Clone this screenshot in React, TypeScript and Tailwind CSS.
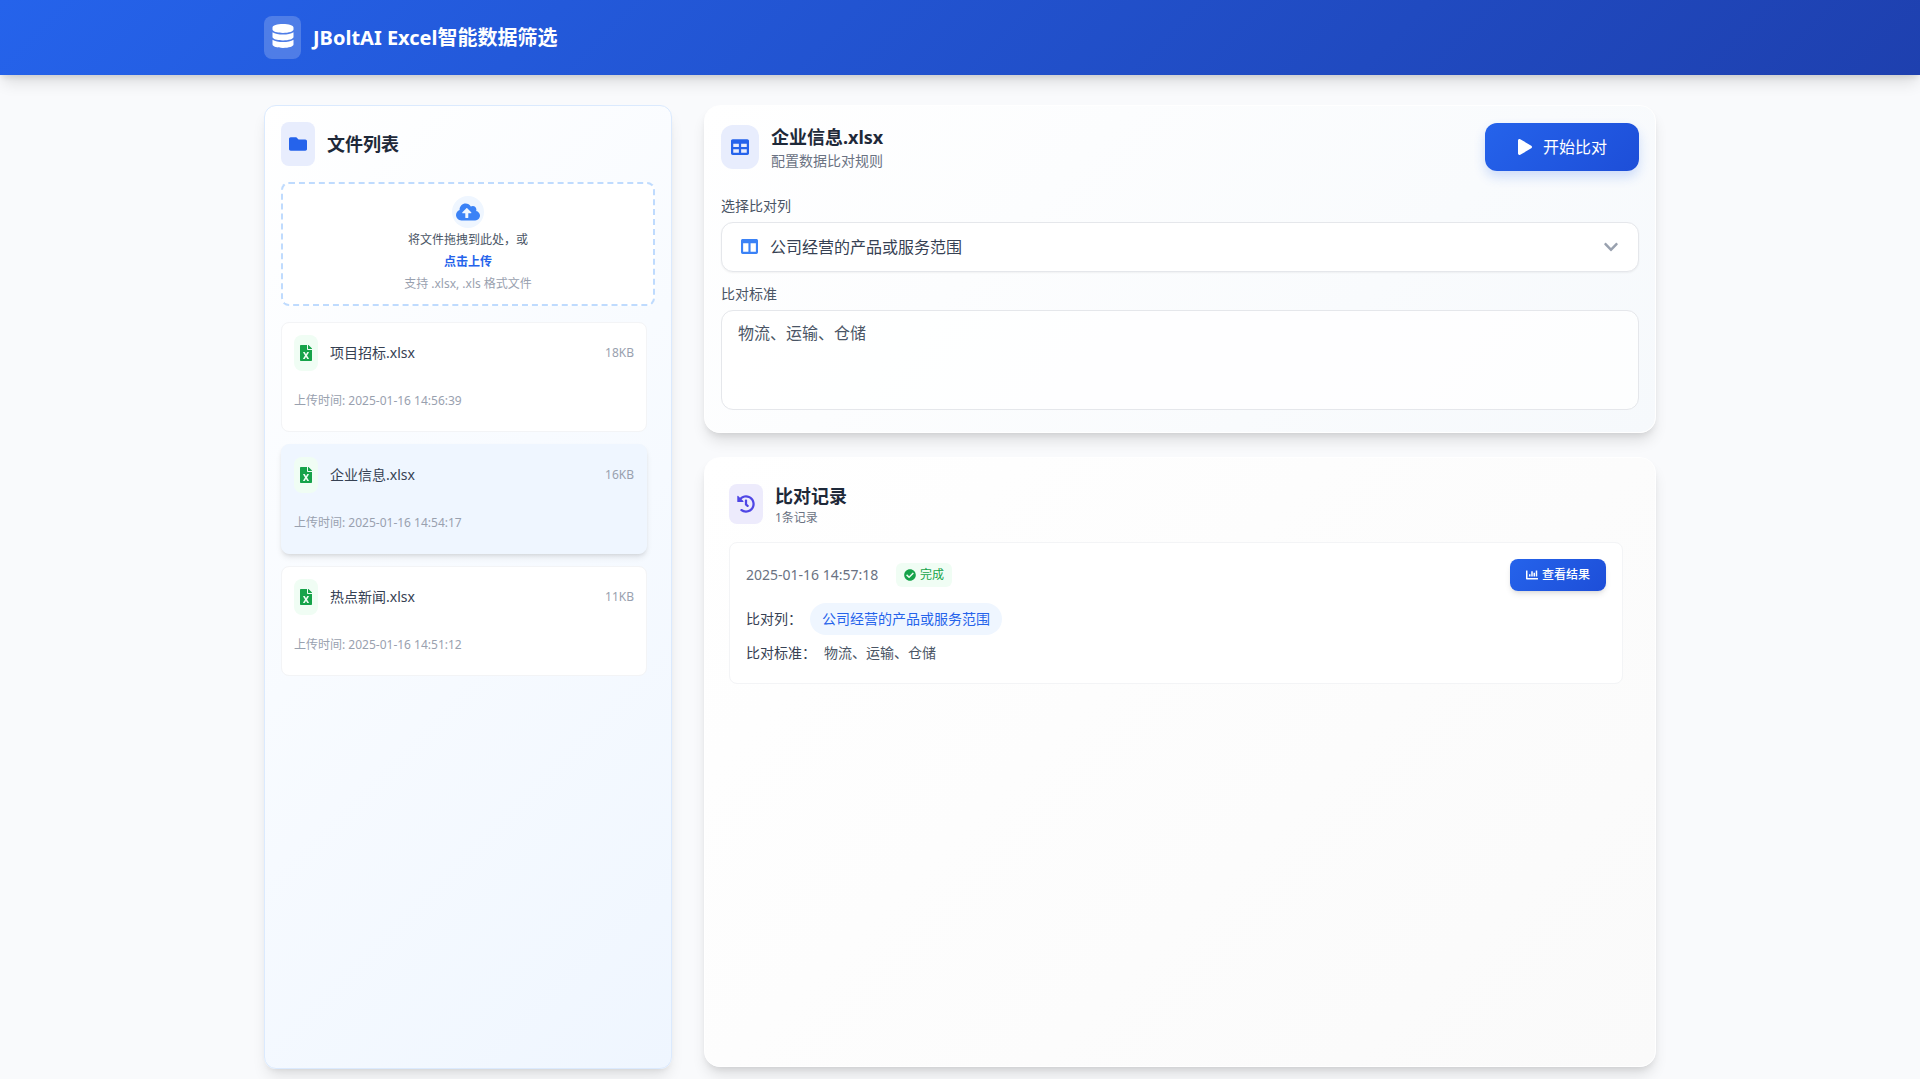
import {
  FaChartBar,
  FaCheckCircle,
  FaChevronDown,
  FaCloudUploadAlt,
  FaColumns,
  FaDatabase,
  FaFileExcel,
  FaFolder,
  FaHistory,
  FaPlay,
  FaTable,
} from "react-icons/fa";

const files = [
  { name: "项目招标.xlsx", size: "18KB", time: "2025-01-16 14:56:39" },
  { name: "企业信息.xlsx", size: "16KB", time: "2025-01-16 14:54:17", active: true },
  { name: "热点新闻.xlsx", size: "11KB", time: "2025-01-16 14:51:12" },
];

const records = [
  {
    time: "2025-01-16 14:57:18",
    status: "完成",
    column: "公司经营的产品或服务范围",
    standard: "物流、运输、仓储",
  },
];

function Header() {
  return (
    <header className="bg-[linear-gradient(135deg,#2563eb,#1e40af)] py-4 shadow-[0_10px_15px_-3px_rgba(0,0,0,0.12),0_4px_6px_-2px_rgba(0,0,0,0.1)]">
      <div className="mx-auto flex max-w-[1440px] items-center gap-3 px-6">
        <div className="flex h-[43px] w-[37px] items-center justify-center rounded-lg bg-white/20 pb-1">
          <FaDatabase className="h-6 w-6 text-white" />
        </div>
        <h1 className="text-xl font-bold text-white">JBoltAI Excel智能数据筛选</h1>
      </div>
    </header>
  );
}

function UploadBox() {
  return (
    <label className="mt-4 flex cursor-pointer flex-col items-center rounded-lg border-2 border-dashed border-[#bfdbfe] bg-white py-3 text-xs">
      <input type="file" accept=".xlsx,.xls" className="sr-only" />
      <span className="flex h-8 w-8 items-center justify-center rounded-full bg-[#eff6ff]">
        <FaCloudUploadAlt className="h-5 w-6 text-[#3b82f6]" />
      </span>
      <span className="mt-1 text-gray-600">将文件拖拽到此处，或</span>
      <span className="mt-[6px] font-semibold text-[#2563eb]">点击上传</span>
      <span className="mt-[6px] text-gray-400">支持 .xlsx, .xls 格式文件</span>
    </label>
  );
}

function FileList() {
  return (
    <aside className="rounded-xl border border-[#dbeafe] bg-[linear-gradient(135deg,#ffffff,#eff6ff)] p-4 shadow-lg">
      <div className="flex items-center gap-3">
        <div className="flex h-11 w-[34px] items-center justify-center rounded-lg bg-[#e8edfd]">
          <FaFolder className="h-[18px] w-[18px] text-[#2563eb]" />
        </div>
        <h2 className="text-lg font-bold text-gray-800">文件列表</h2>
      </div>

      <UploadBox />

      <ul className="mt-4 space-y-3 pr-2">
        {files.map((file) => (
          <li key={file.name}>
            <button
              type="button"
              className={
                file.active
                  ? "block w-full rounded-lg border border-[#eff6ff] bg-[#eff6ff] px-3 pt-3 pb-[22px] text-left shadow-md"
                  : "block w-full rounded-lg border border-gray-100 bg-white px-3 pt-3 pb-[22px] text-left"
              }
            >
              <span className="flex items-center">
                <span className="flex h-9 w-6 items-center justify-center rounded-lg bg-[#f0fdf4]">
                  <FaFileExcel className="h-4 w-4 text-[#16a34a]" />
                </span>
                <span className="ml-3 flex-1 text-sm text-gray-700">{file.name}</span>
                <span className="text-xs text-gray-400">{file.size}</span>
              </span>
              <span className="mt-[22px] block text-xs text-gray-400">上传时间: {file.time}</span>
            </button>
          </li>
        ))}
      </ul>
    </aside>
  );
}

function ComparePanel() {
  return (
    <section className="rounded-2xl border border-white bg-[linear-gradient(135deg,#ffffff,#f6f9fc)] px-4 pt-[17px] pb-[22px] shadow-[0_10px_15px_-3px_rgba(0,0,0,0.12),0_4px_6px_-2px_rgba(0,0,0,0.08)]">
      <div className="flex items-start justify-between">
        <div className="flex items-center gap-3">
          <div className="flex h-11 w-[38px] items-center justify-center rounded-xl bg-[#e8edfd]">
            <FaTable className="h-[18px] w-[18px] text-[#2563eb]" />
          </div>
          <div>
            <h2 className="text-lg font-bold text-gray-800">企业信息.xlsx</h2>
            <p className="text-sm text-gray-500">配置数据比对规则</p>
          </div>
        </div>
        <button
          type="button"
          className="flex h-12 items-center gap-[10px] rounded-xl bg-[linear-gradient(135deg,#2563eb,#1d4ed8)] px-8 text-white shadow-[0_6px_12px_rgba(37,99,235,0.2)]"
        >
          <FaPlay className="h-4 w-4" />
          开始比对
        </button>
      </div>

      <label htmlFor="column" className="mt-[25px] block text-sm text-gray-600">
        选择比对列
      </label>
      <div className="relative mt-[6px]">
        <FaColumns className="absolute top-4 left-5 h-[17px] w-[17px] text-[#3b82f6]" />
        <select
          id="column"
          className="h-[50px] w-full appearance-none rounded-xl border border-gray-200 bg-white pl-12 text-gray-700 shadow-[0_1px_2px_rgba(0,0,0,0.05)]"
        >
          <option>公司经营的产品或服务范围</option>
        </select>
        <FaChevronDown className="pointer-events-none absolute top-[17px] right-5 h-4 w-4 text-gray-400" />
      </div>

      <label htmlFor="standard" className="mt-3 block text-sm text-gray-600">
        比对标准
      </label>
      <textarea
        id="standard"
        defaultValue="物流、运输、仓储"
        className="mt-[6px] block h-[100px] w-full resize-none rounded-xl border border-gray-200 bg-white/80 px-4 py-[10px] text-gray-600"
      />
    </section>
  );
}

function RecordPanel() {
  return (
    <section className="flex-1 rounded-2xl border border-white bg-[linear-gradient(135deg,#ffffff,#fafafa)] p-6 pr-8 shadow-[0_10px_15px_-3px_rgba(0,0,0,0.12),0_4px_6px_-2px_rgba(0,0,0,0.08)]">
      <div className="flex items-center gap-3">
        <div className="flex h-10 w-[34px] items-center justify-center rounded-lg bg-[#edebfc]">
          <FaHistory className="h-[18px] w-[18px] text-[#4f46e5]" />
        </div>
        <div>
          <h2 className="text-lg font-bold text-gray-800">比对记录</h2>
          <p className="text-xs text-gray-500">1条记录</p>
        </div>
      </div>

      {records.map((record) => (
        <article key={record.time} className="mt-4 rounded-lg border border-gray-100 bg-white px-4 pt-4 pb-5 text-sm">
          <div className="flex items-center justify-between">
            <div className="flex items-center gap-3">
              <time className="min-w-[138px] text-gray-500">{record.time}</time>
              <span className="flex h-6 items-center gap-1 rounded-md bg-[#f0fdf4] px-2 text-xs text-[#16a34a]">
                <FaCheckCircle className="h-3 w-3" />
                {record.status}
              </span>
            </div>
            <button
              type="button"
              className="flex h-8 items-center gap-1 rounded-lg bg-[linear-gradient(135deg,#2563eb,#1d4ed8)] px-4 text-xs font-medium text-white shadow-md"
            >
              <FaChartBar className="h-3 w-3" />
              查看结果
            </button>
          </div>
          <div className="mt-3 flex items-center gap-2">
            <span className="text-gray-700">比对列：</span>
            <span className="flex h-8 items-center rounded-full bg-[#eff6ff] px-3 text-[#2563eb]">
              {record.column}
            </span>
          </div>
          <div className="mt-2 flex items-center gap-2">
            <span className="text-gray-700">比对标准：</span>
            <span className="text-gray-600">{record.standard}</span>
          </div>
        </article>
      ))}
    </section>
  );
}

export default function App() {
  return (
    <div className="flex min-h-screen flex-col bg-[#f9fafc] font-['Noto_Sans','Noto_Sans_CJK_SC',sans-serif]">
      <Header />
      <main className="mx-auto grid w-full max-w-[1440px] flex-1 grid-cols-[3fr_7fr] gap-8 px-6 pt-[30px] pb-[10px]">
        <FileList />
        <div className="flex flex-col gap-6 pb-[2px]">
          <ComparePanel />
          <RecordPanel />
        </div>
      </main>
    </div>
  );
}
